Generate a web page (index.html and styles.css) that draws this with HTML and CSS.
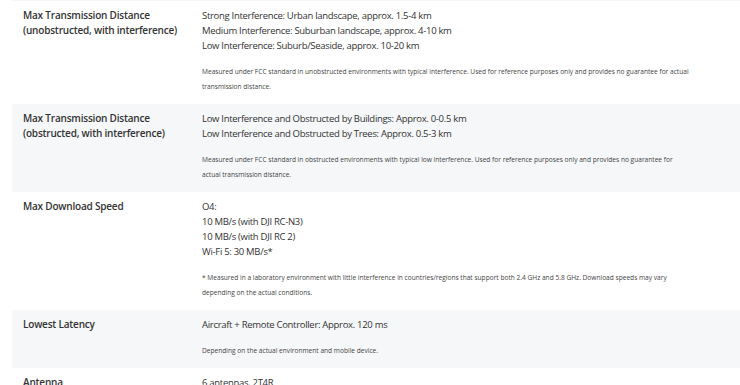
FILE: index.html
```html
<!DOCTYPE html>
<html lang="en">
<head>
    <meta charset="UTF-8">
    <meta name="viewport" content="width=device-width, initial-scale=1.0">
    <title>Specs - Transmission</title>
    <link rel="stylesheet" href="styles.css">
</head>
<body>
    <div class="spec-list">
        <!-- tail of the previous row, scrolled off -->
        <div class="spec-row alt spec-tail"></div>

        <div class="spec-row">
            <div class="spec-label">Max Transmission Distance<br>(unobstructed, with interference)</div>
            <div class="spec-value">
                <p>Strong Interference: Urban landscape, approx. 1.5-4 km<br>
                Medium Interference: Suburban landscape, approx. 4-10 km<br>
                Low Interference: Suburb/Seaside, approx. 10-20 km</p>
                <p class="spec-note">Measured under FCC standard in unobstructed environments with typical interference. Used for reference purposes only and provides no guarantee for actual transmission distance.</p>
            </div>
        </div>

        <div class="spec-row alt">
            <div class="spec-label">Max Transmission Distance<br>(obstructed, with interference)</div>
            <div class="spec-value">
                <p>Low Interference and Obstructed by Buildings: Approx. 0-0.5 km<br>
                Low Interference and Obstructed by Trees: Approx. 0.5-3 km</p>
                <p class="spec-note">Measured under FCC standard in obstructed environments with typical low interference. Used for reference purposes only and provides no guarantee for actual transmission distance.</p>
            </div>
        </div>

        <div class="spec-row">
            <div class="spec-label">Max Download Speed</div>
            <div class="spec-value">
                <p>O4:<br>
                10 MB/s (with DJI RC-N3)<br>
                10 MB/s (with DJI RC 2)<br>
                Wi-Fi 5: 30 MB/s*</p>
                <p class="spec-note">* Measured in a laboratory environment with little interference in countries/regions that support both 2.4 GHz and 5.8 GHz. Download speeds may vary depending on the actual conditions.</p>
            </div>
        </div>

        <div class="spec-row alt">
            <div class="spec-label">Lowest Latency</div>
            <div class="spec-value">
                <p>Aircraft + Remote Controller: Approx. 120 ms</p>
                <p class="spec-note">Depending on the actual environment and mobile device.</p>
            </div>
        </div>

        <div class="spec-row">
            <div class="spec-label">Antenna</div>
            <div class="spec-value">
                <p>6 antennas, 2T4R</p>
            </div>
        </div>
    </div>
</body>
</html>
```

FILE: styles.css
```css
body {
    margin: 0;
    background-color: #fff;
    font-family: "Open Sans", "Liberation Sans", sans-serif;
    color: #333;
}
.spec-list { margin-left: 12px; }
.spec-row {
    display: grid;
    grid-template-columns: 179px 1fr;
    padding: 7px 48px 10px 11px;
}
.spec-row.alt { background-color: #f6f7f9; }
.spec-tail { height: 1px; padding: 0; }
.spec-label {
    font-size: 10px;
    font-weight: 600;
    letter-spacing: -0.2px;
    line-height: 15px;
    color: #333;
}
.spec-value p {
    margin: 0;
    font-size: 9.5px;
    letter-spacing: -0.3px;
    line-height: 15px;
    color: #333;
}
.spec-value .spec-note {
    margin-top: 11px;
    font-size: 6.6px;
    letter-spacing: 0;
    line-height: 15px;
    color: #444;
}
```
